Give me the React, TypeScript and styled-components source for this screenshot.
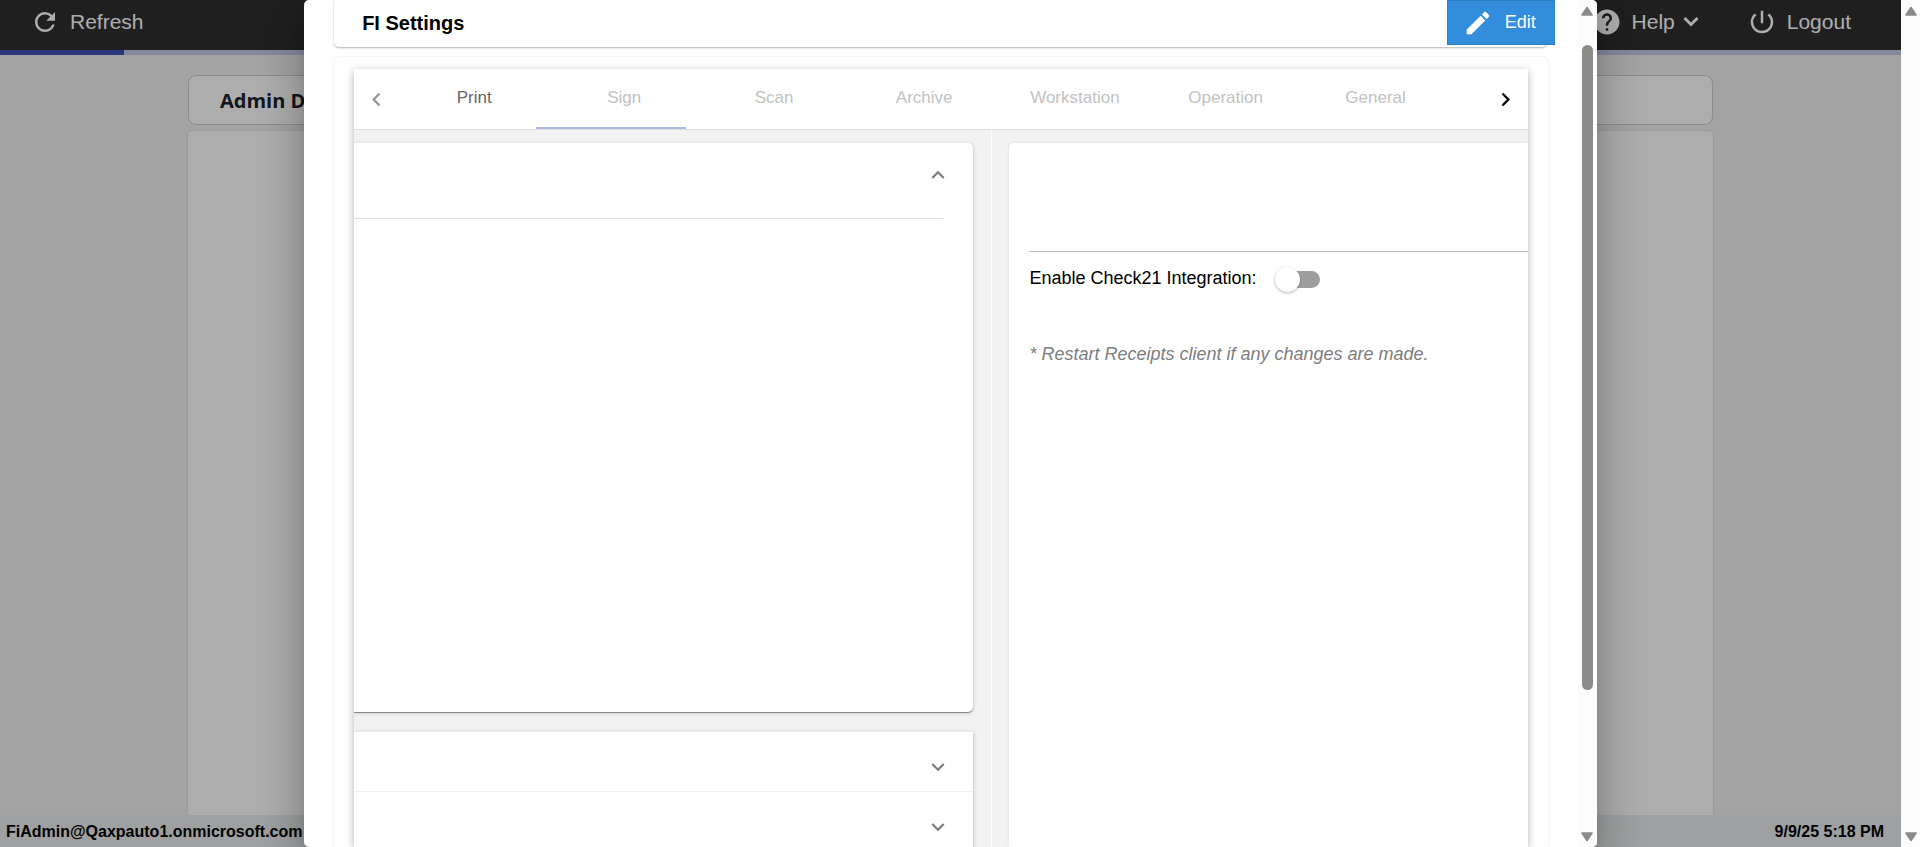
import React from 'react';
import styled, { createGlobalStyle, css } from 'styled-components';
import {
  MdChevronLeft,
  MdChevronRight,
  MdEdit,
  MdExpandLess,
  MdExpandMore,
  MdHelp,
  MdPowerSettingsNew,
  MdRefresh,
} from 'react-icons/md';

const GlobalStyle = createGlobalStyle`
  * { box-sizing: border-box; }
  body {
    margin: 0;
    font-family: "Liberation Sans", Arial, sans-serif;
    font-size: 18px;
    color: #000;
  }
  button { font: inherit; cursor: pointer; }
`;

const Window = styled.div`
  display: grid;
  grid-template-columns: minmax(0, 1fr) 19px;
  height: 100vh;
  overflow: hidden;
`;

const Viewport = styled.div`
  position: relative;
  min-width: 0;
  height: 100vh;
  overflow: hidden;
`;

const Page = styled.div`
  display: flex;
  flex-direction: column;
  height: 100%;
  background: #f1f1f1;
`;

const TopBar = styled.header`
  display: flex;
  align-items: center;
  justify-content: space-between;
  height: 50px;
  flex: none;
  padding: 0 50px 6px 30px;
  background: #2e2e2e;
`;

const TopActions = styled.nav`
  display: flex;
  align-items: center;
  gap: 48px;
`;

const TopButton = styled.button`
  display: flex;
  align-items: center;
  gap: 10px;
  height: 44px;
  padding: 0;
  border: 0;
  background: none;
  color: #fff;
  font-size: 21px;
`;

const HelpLabel = styled.span`
  display: flex;
  align-items: center;
  gap: 8px;
`;

const ProgressTrack = styled.div`
  height: 5px;
  flex: none;
  background: #c5cae9;
`;

const ProgressValue = styled.div`
  width: 124px;
  height: 100%;
  background: #3f51b5;
`;

const Content = styled.main`
  display: flex;
  flex: 1;
  flex-direction: column;
  gap: 6px;
  min-height: 0;
  padding: 20px 188px 0;
`;

const TitleCard = styled.div`
  display: flex;
  align-items: center;
  height: 50px;
  flex: none;
  padding: 0 31px;
  border: 1px solid #cdcdcd;
  border-radius: 8px;
  background: #fff;
`;

const PageTitle = styled.h1`
  margin: 0;
  color: #1b222c;
  font: 700 20px "Open Sans", sans-serif;
`;

const PageCard = styled.section`
  flex: 1;
  border-radius: 4px 4px 0 0;
  background: #fff;
  box-shadow: 0 0 2px rgba(0, 0, 0, 0.2);
`;

const StatusBar = styled.footer`
  display: flex;
  align-items: center;
  justify-content: space-between;
  position: relative;
  height: 32px;
  flex: none;
  padding: 2px 17px 0 6px;
  background: #e9ecee;
  font-size: 16px;
  font-weight: 700;
`;

const Backdrop = styled.div`
  position: absolute;
  inset: 0;
  display: flex;
  justify-content: center;
  background: rgba(0, 0, 0, 0.32);
`;

const Dialog = styled.div`
  display: grid;
  grid-template-columns: minmax(0, 1fr) 19px;
  width: 68%;
  height: 100%;
  border-radius: 5px;
  overflow: hidden;
  background: #fff;
  box-shadow: 0 11px 15px -7px rgba(0, 0, 0, 0.2), 0 24px 38px 3px rgba(0, 0, 0, 0.14),
    0 9px 46px 8px rgba(0, 0, 0, 0.12);
`;

const DialogBody = styled.div`
  display: flex;
  flex-direction: column;
  gap: 10px;
  min-height: 0;
  padding: 0 30px;
  overflow: hidden;
`;

const DialogHeader = styled.div`
  display: flex;
  align-items: flex-start;
  justify-content: space-between;
  height: 47px;
  flex: none;
  margin-right: 1px;
  padding-left: 28px;
  border-radius: 0 0 5px 5px;
  background: #fff;
  box-shadow: 0 1px 2px rgba(0, 0, 0, 0.3);
`;

const DialogTitle = styled.h2`
  margin: 0;
  font-size: 20px;
  line-height: 46px;
`;

const EditButton = styled.button`
  display: flex;
  align-items: center;
  gap: 12px;
  height: 45px;
  margin-right: -8px;
  padding: 0 18px 0 15px;
  border: 1px solid #2b7dc4;
  background: #328ddc;
  color: #fff;
`;

const SettingsCard = styled.section`
  display: flex;
  flex: 1;
  min-height: 0;
  padding: 12px 20px 0;
  border-radius: 5px 5px 0 0;
  box-shadow: 0 0 2px rgba(0, 0, 0, 0.14);
`;

const TabPanelGroup = styled.div`
  display: flex;
  flex: 1;
  flex-direction: column;
  min-width: 0;
  background: #f2f2f2;
  box-shadow: 0 2px 8px rgba(0, 0, 0, 0.3);
`;

const TabHeader = styled.div`
  display: flex;
  height: 61px;
  flex: none;
  border-bottom: 1px solid #e0e0e0;
  background: #fff;
`;

const Pager = styled.button`
  display: flex;
  align-items: center;
  justify-content: center;
  width: 45px;
  flex: none;
  padding: 0;
  border: 0;
  background: none;
  color: #000;

  &:disabled { color: #959595; }
`;

const TabList = styled.div`
  display: flex;
  position: relative;
  flex: 1;
  min-width: 0;
`;

const Tab = styled.button<{ $active?: boolean }>`
  min-width: 150px;
  padding: 0 31px 2px;
  border: 0;
  background: none;
  color: ${({ $active }) => ($active ? '#666' : '#c2c2c2')};
  font-size: 17px;
`;

const InkBar = styled.span`
  position: absolute;
  bottom: 0;
  left: 137px;
  width: 150px;
  height: 2px;
  background: #afbae2;
`;

const Columns = styled.div`
  display: flex;
  flex: 1;
  min-height: 0;
  overflow: hidden;
`;

const LeftColumn = styled.div`
  display: flex;
  flex: 639 1 0;
  flex-direction: column;
  gap: 20px;
  padding: 13px 18px 0 0;
  border-right: 1px solid #fcfcfc;
`;

const RightColumn = styled.div`
  display: flex;
  flex: 535 1 0;
  padding: 13px 0 0 17px;
`;

const raised = css`
  background: #fff;
  box-shadow: 0 1px 1px rgba(0, 0, 0, 0.4), 0 1px 5px rgba(0, 0, 0, 0.16);
`;

const ExpandedCard = styled.section`
  height: 569px;
  flex: none;
  padding-right: 30px;
  border-radius: 0 5px 5px 0;
  ${raised}
`;

const ExpandedHeader = styled.div`
  display: flex;
  align-items: flex-start;
  justify-content: flex-end;
  height: 76px;
  padding-top: 19px;
  border-bottom: 1px solid #dedede;
`;

const ExpandButton = styled.button`
  display: flex;
  align-items: center;
  justify-content: center;
  width: 26px;
  height: 26px;
  margin-right: -8px;
  padding: 0;
  border: 0;
  background: none;
  color: #7c7c7c;
`;

const Accordion = styled.section`
  flex: none;
  ${raised}
`;

const AccordionRow = styled.div`
  display: flex;
  align-items: center;
  justify-content: flex-end;
  height: 60px;
  padding: 10px 30px 0 0;
  border-bottom: 1px solid #f1f1f1;
`;

const IntegrationCard = styled.section`
  flex: 1;
  padding-left: 20px;
  border-radius: 5px 0 0 0;
  background: #fff;
  box-shadow: 0 0 3px rgba(0, 0, 0, 0.1);
`;

const IntegrationHeader = styled.div`
  height: 109px;
  border-bottom: 1px solid #bdbdbd;
`;

const SwitchRow = styled.label`
  display: flex;
  align-items: center;
  gap: 18px;
  height: 52px;
`;

const Switch = styled.input`
  appearance: none;
  display: flex;
  align-items: center;
  width: 45px;
  height: 17px;
  margin: 3px 0 0;
  border-radius: 9px;
  background: #9e9e9e;

  &::before {
    content: '';
    width: 25px;
    height: 25px;
    flex: none;
    border-radius: 50%;
    background: #fff;
    box-shadow: 0 1px 3px rgba(0, 0, 0, 0.3);
  }
`;

const Note = styled.p`
  margin: 40px 0 0;
  color: #7d7d7d;
  font-style: italic;
  line-height: 20px;
`;

const ScrollTrack = styled.div`
  display: flex;
  flex-direction: column;
  align-items: center;
  height: 100%;
  padding: 6px 0 5px;
  background: #fcfcfc;

  svg { width: 12px; height: 10px; flex: none; fill: #8b8b8b; stroke: #8b8b8b; stroke-linejoin: round; }
`;

const ScrollArea = styled.div`
  display: flex;
  flex: 1;
  justify-content: center;
  padding-top: 29px;
`;

const ScrollThumb = styled.div`
  width: 11px;
  height: 82%;
  border-radius: 6px;
  background: #8b8b8b;
`;

function Scrollbar({ thumb }: { thumb?: boolean }) {
  return (
    <ScrollTrack aria-hidden="true">
      <svg viewBox="0 0 12 10"><path d="M6 1.5 11 9H1Z" strokeWidth="1.6" /></svg>
      <ScrollArea>{thumb && <ScrollThumb />}</ScrollArea>
      <svg viewBox="0 0 12 10"><path d="M6 8.5 11 1H1Z" strokeWidth="1.6" /></svg>
    </ScrollTrack>
  );
}

function MenuCaret() {
  return (
    <svg width="16" height="12" viewBox="0 0 16 12" fill="none" stroke="currentColor" strokeWidth="3" aria-hidden="true">
      <path d="M1.5 2 8 8.5 14.5 2" />
    </svg>
  );
}

const tabs = ['Print', 'Sign', 'Scan', 'Archive', 'Workstation', 'Operation', 'General'];

export default function App() {
  return (
    <Window>
      <GlobalStyle />
      <Viewport>
        <Page>
          <TopBar>
            <TopButton type="button"><MdRefresh size={30} />Refresh</TopButton>
            <TopActions>
              <TopButton type="button">
                <MdHelp size={30} />
                <HelpLabel>Help<MenuCaret /></HelpLabel>
              </TopButton>
              <TopButton type="button"><MdPowerSettingsNew size={30} />Logout</TopButton>
            </TopActions>
          </TopBar>
          <ProgressTrack><ProgressValue /></ProgressTrack>
          <Content>
            <TitleCard><PageTitle>Admin Da</PageTitle></TitleCard>
            <PageCard />
          </Content>
          <StatusBar>
            <span>FiAdmin@Qaxpauto1.onmicrosoft.com</span>
            <span>9/9/25 5:18 PM</span>
          </StatusBar>
        </Page>

        <Backdrop>
          <Dialog role="dialog" aria-labelledby="settings-title">
            <DialogBody>
              <DialogHeader>
                <DialogTitle id="settings-title">FI Settings</DialogTitle>
                <EditButton type="button"><MdEdit size={30} />Edit</EditButton>
              </DialogHeader>
              <SettingsCard>
                <TabPanelGroup>
                  <TabHeader>
                    <Pager type="button" aria-label="Previous tabs" disabled><MdChevronLeft size={27} /></Pager>
                    <TabList role="tablist">
                      {tabs.map((name, i) => (
                        <Tab key={name} type="button" role="tab" aria-selected={i === 0} $active={i === 0}>
                          {name}
                        </Tab>
                      ))}
                      <InkBar />
                    </TabList>
                    <Pager type="button" aria-label="Next tabs"><MdChevronRight size={27} /></Pager>
                  </TabHeader>
                  <Columns>
                    <LeftColumn>
                      <ExpandedCard>
                        <ExpandedHeader>
                          <ExpandButton type="button" aria-label="Collapse"><MdExpandLess size={28} /></ExpandButton>
                        </ExpandedHeader>
                      </ExpandedCard>
                      <Accordion>
                        <AccordionRow>
                          <ExpandButton type="button" aria-label="Expand"><MdExpandMore size={28} /></ExpandButton>
                        </AccordionRow>
                        <AccordionRow>
                          <ExpandButton type="button" aria-label="Expand"><MdExpandMore size={28} /></ExpandButton>
                        </AccordionRow>
                      </Accordion>
                    </LeftColumn>
                    <RightColumn>
                      <IntegrationCard>
                        <IntegrationHeader />
                        <SwitchRow>
                          Enable Check21 Integration:
                          <Switch type="checkbox" role="switch" />
                        </SwitchRow>
                        <Note>* Restart Receipts client if any changes are made.</Note>
                      </IntegrationCard>
                    </RightColumn>
                  </Columns>
                </TabPanelGroup>
              </SettingsCard>
            </DialogBody>
            <Scrollbar thumb />
          </Dialog>
        </Backdrop>
      </Viewport>
      <Scrollbar />
    </Window>
  );
}
